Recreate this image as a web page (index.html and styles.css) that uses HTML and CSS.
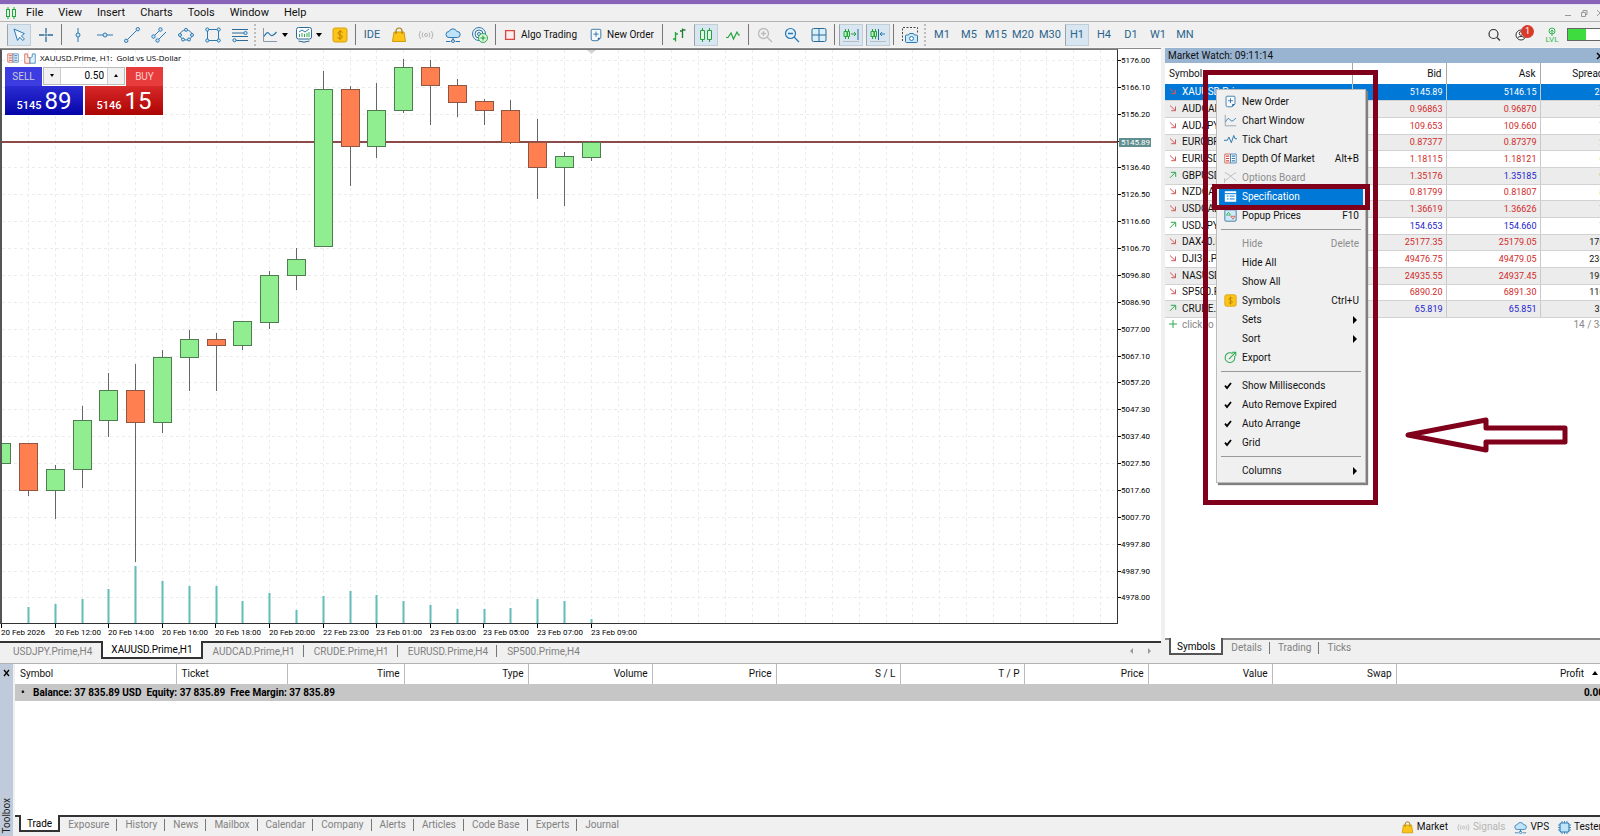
FILE: index.html
```html
<!DOCTYPE html>
<html lang="en">
<head>
<meta charset="utf-8">
<title>XAUUSD.Prime, H1</title>
<link rel="stylesheet" href="styles.css">
</head>
<body>
<svg class="defs" aria-hidden="true">
  <symbol id="i-down" viewBox="0 0 8 8"><path d="M1 1.500 6.200 6.500M6.500 2.500v4.200H2.200" fill="none" stroke="#cf5a5a"/></symbol>
  <symbol id="i-up" viewBox="0 0 8 8"><path d="M1 6.800 6.200 1.600M1.800 1.300h4.900v4.600" fill="none" stroke="#2fa84f"/></symbol>
  <symbol id="i-order" viewBox="0 0 16 16"><path d="M3.500 1.500h9a1 1 0 0 1 1 1v8.500L10 14.500H4.500a2 2 0 0 1-2-2v-10a1 1 0 0 1 1-1z" fill="#f4fafe" stroke="#2a6d9e"/><path d="M8 4v6M5 7h6" stroke="#2a6d9e"/><path d="M13.500 11H11a1 1 0 0 0-1 1v2.500z" fill="#2a6d9e"/></symbol>
  <symbol id="i-chart" viewBox="0 0 16 16"><path d="M1.500 1v13.500H15" fill="none" stroke="#8a99a8"/><path d="M2 9.500C4 6 5.500 4.500 7 6.500s3 4 7.500-1.500" fill="none" stroke="#2d78b0" stroke-width="1.200"/></symbol>
  <symbol id="i-dollar" viewBox="0 0 16 16"><rect x="1" y="1" width="14" height="14" rx="2" fill="#fcc419" stroke="#d9a00c"/><path d="M10.500 5.500C10 4.400 6 4 6 6.200 6 8.300 10.300 7.500 10.300 9.800c0 2.200-4.300 1.900-4.800.3M8 3v10" fill="none" stroke="#b97e00"/></symbol>
  <symbol id="i-bag" viewBox="0 0 16 16"><path d="M3 5h10l1.500 9.500h-13z" fill="#fcc419" stroke="#d09a08"/><path d="M5 7V4a3 3 0 0 1 6 0v3" fill="none" stroke="#a87f10" stroke-width="1.200"/></symbol>
  <symbol id="i-signal" viewBox="0 0 16 16"><g fill="none" stroke="#b5b5b5"><circle cx="8" cy="8" r="1.500"/><path d="M5 5.500a4 4 0 0 0 0 5M11 5.500a4 4 0 0 1 0 5M2.500 4a7 7 0 0 0 0 8M13.500 4a7 7 0 0 1 0 8"/></g></symbol>
  <symbol id="i-cloud" viewBox="0 0 16 16"><path d="M4 10.500a3 3 0 0 1 0-6 4.200 4.200 0 0 1 7.800 0 3 3 0 0 1 .7 6z" fill="#bfe4fa" stroke="#2d78b0"/><path d="M8 10.500v3M1 14.500h4.500M10.500 14.500H15" stroke="#2d78b0"/><circle cx="8" cy="14" r="1.500" fill="none" stroke="#2d78b0"/></symbol>
  <symbol id="i-depth" viewBox="0 0 16 16"><path d="M1 2.500h7v11H1z" fill="#fff" stroke="#c85040"/><path d="M8 2.500h7v11H8z" fill="#fff" stroke="#2d78b0"/><path d="M2.500 5h4M2.500 8h4M2.500 11h4" stroke="#c85040" stroke-width="1.500"/><path d="M9.500 5h4M9.500 8h4M9.500 11h4" stroke="#2d78b0" stroke-width="1.500"/></symbol>
  <symbol id="i-tick" viewBox="0 0 8 8"><path d="M1 3.700 3 6 7 1" fill="none" stroke="#000" stroke-width="1.800"/></symbol>
</svg>

<div class="app">
  <div class="titlebar"></div>
  <header class="menubar">
    <svg class="logo" viewBox="0 0 12 12" width="12" height="12"><path d="M3 0v12M9 0v12" stroke="#22a33c"/><rect x="1.500" y="2.500" width="3" height="7" fill="#e9f9ea" stroke="#22a33c"/><rect x="7.500" y="2.500" width="3" height="7" fill="#e9f9ea" stroke="#22a33c"/></svg>
    <nav class="menus">
      <button>File</button><button>View</button><button>Insert</button><button>Charts</button><button>Tools</button><button>Window</button><button>Help</button>
    </nav>
    <div class="winctl">
      <button aria-label="Minimize"><svg width="8" height="8" viewBox="0 0 8 8"><path d="M1 6.500h6" stroke="#999"/></svg></button>
      <button aria-label="Restore"><svg width="8" height="8" viewBox="0 0 8 8"><path d="M1.500 3.500h4v4h-4zM3 3V1.500h4v4H6" fill="none" stroke="#999"/></svg></button>
      <button aria-label="Close"><svg width="8" height="8" viewBox="0 0 8 8"><path d="m1 1 6 6M7 1 1 7" stroke="#999"/></svg></button>
    </div>
  </header>

  <div class="toolbar">
    <div class="group">
      <button class="tool on" aria-label="Cursor"><svg viewBox="0 0 16 16"><path d="M3 2l3.500 11.500 2.300-3.200 3 3.200 1.600-1.600-3-3 3-2.300z" fill="#f2f9fe" stroke="#2d78b0"/></svg></button>
      <button class="tool" aria-label="Crosshair"><svg viewBox="0 0 16 16"><path d="M8 1v5.500M8 9.500V15M1 8h5.500M9.500 8H15" stroke="#2d6a96" stroke-width="1.300"/><path d="M8 7v2M7 8h2" stroke="#2d6a96"/></svg></button>
    </div>
    <i class="sep"></i>
    <div class="group">
      <button class="tool" aria-label="Vertical line"><svg viewBox="0 0 16 16"><path d="M8 1v5M8 10v5" stroke="#2d78b0"/><circle cx="8" cy="8" r="2" fill="#cfe9fa" stroke="#2d78b0"/></svg></button>
      <button class="tool" aria-label="Horizontal line"><svg viewBox="0 0 16 16"><path d="M0 8h6M10 8h6" stroke="#2d78b0"/><circle cx="8" cy="8" r="2" fill="#cfe9fa" stroke="#2d78b0"/></svg></button>
      <button class="tool" aria-label="Trend line"><svg viewBox="0 0 16 16"><path d="M3 13 13 3" stroke="#2d78b0"/><circle cx="2.200" cy="13.800" r="1.700" fill="#cfe9fa" stroke="#2d78b0"/><circle cx="13.800" cy="2.200" r="1.700" fill="#cfe9fa" stroke="#2d78b0"/></svg></button>
      <button class="tool" aria-label="Channel"><svg viewBox="0 0 16 16"><path d="M3 9 9 3M7 13l8-8" stroke="#2d78b0"/><circle cx="2.500" cy="9.500" r="1.700" fill="#cfe9fa" stroke="#2d78b0"/><circle cx="9.500" cy="2.500" r="1.700" fill="#cfe9fa" stroke="#2d78b0"/><circle cx="6.500" cy="13.500" r="1.700" fill="#cfe9fa" stroke="#2d78b0"/></svg></button>
      <button class="tool" aria-label="Ellipse"><svg viewBox="0 0 16 16"><ellipse cx="8" cy="8" rx="6" ry="5" fill="none" stroke="#2d78b0"/><g fill="#cfe9fa" stroke="#2d78b0"><circle cx="8" cy="2.800" r="1.500"/><circle cx="2" cy="8" r="1.500"/><circle cx="14" cy="8" r="1.500"/><circle cx="5" cy="12.500" r="1.500"/><circle cx="11" cy="12.500" r="1.500"/></g></svg></button>
      <button class="tool" aria-label="Rectangle"><svg viewBox="0 0 16 16"><path d="M2.500 2.500h11v11h-11z" fill="none" stroke="#2d78b0"/><g fill="#cfe9fa" stroke="#2d78b0"><circle cx="2.300" cy="2.500" r="1.600"/><circle cx="13.700" cy="2.500" r="1.600"/><circle cx="2.300" cy="13.500" r="1.600"/><circle cx="13.700" cy="13.500" r="1.600"/></g></svg></button>
      <button class="tool" aria-label="Fibonacci"><svg viewBox="0 0 16 16"><path d="M0 2.500h16M0 6h12M0 9.500h16M4 13.500h12" stroke="#2d6a96" stroke-width="1.200"/><circle cx="13.500" cy="6" r="1.600" fill="#cfe9fa" stroke="#2d78b0"/><circle cx="2.500" cy="13.200" r="1.600" fill="#cfe9fa" stroke="#2d78b0"/></svg></button>
    </div>
    <i class="grip"></i>
    <div class="group wide">
      <button class="tool drop" aria-label="Chart type"><svg viewBox="0 0 16 16"><use href="#i-chart"/></svg><svg class="caret" viewBox="0 0 6 4"><path d="M0 0h6L3 4z"/></svg></button>
      <button class="tool drop" aria-label="Templates"><svg viewBox="0 0 16 16"><rect x=".5" y=".5" width="15" height="11.500" rx="2" fill="#fff" stroke="#2d6a96"/><path d="M2.500 14a14 14 0 0 0 11 0" fill="#bfe4fa" stroke="#2d6a96"/><path d="m3 5 3-2 3 2 4-3" fill="none" stroke="#2d78b0"/><path d="M3.500 10V7M6 10V6M8.500 10V7M11 10V6M13 10V5" stroke="#2fa84f"/></svg><svg class="caret" viewBox="0 0 6 4"><path d="M0 0h6L3 4z"/></svg></button>
      <button class="tool" aria-label="Symbols"><svg viewBox="0 0 16 16"><use href="#i-dollar"/></svg></button>
    </div>
    <i class="sep"></i>
    <div class="group">
      <button class="tool ide">IDE</button>
      <button class="tool" aria-label="Market"><svg viewBox="0 0 16 16"><use href="#i-bag"/></svg></button>
      <button class="tool" aria-label="Signals"><svg viewBox="0 0 16 16"><use href="#i-signal"/></svg></button>
      <button class="tool" aria-label="VPS"><svg viewBox="0 0 16 16"><use href="#i-cloud"/></svg></button>
      <button class="tool" aria-label="Copy"><svg viewBox="0 0 16 16"><g fill="none" stroke="#2d78b0"><circle cx="7" cy="7" r="6.500"/><circle cx="7" cy="7" r="4"/><circle cx="7" cy="7" r="1.500"/></g><circle cx="11" cy="11" r="4.500" fill="#d8f5dc" stroke="#2fa84f"/><path d="M11 8.500v5M8.500 11h5" stroke="#1c9a38"/></svg></button>
    </div>
    <i class="sep"></i>
    <button class="tool text algo"><svg viewBox="0 0 16 16"><path d="M3 3h10v10H3z" fill="#fdeceb" stroke="#d9463b" stroke-width="1.500"/></svg>Algo Trading</button>
    <button class="tool text neworder"><svg viewBox="0 0 16 16"><use href="#i-order"/></svg>New Order</button>
    <i class="sep"></i>
    <div class="group">
      <button class="tool" aria-label="Bars"><svg viewBox="0 0 16 16"><path d="M4.500 5v9.500M2 12h2.500M4.500 7H7" stroke="#22a33c" stroke-width="1.300"/><path d="M11.500 1.500V11M9 4h2.500M11.500 3H14.500" stroke="#1f7a33" stroke-width="1.300"/></svg></button>
      <button class="tool on" aria-label="Candles"><svg viewBox="0 0 16 16"><path d="M4.500 1v14M11.500 1v14" stroke="#22a33c"/><path d="M2.500 3.500h4v9h-4zM9.500 3.500h4v9h-4z" fill="#e3f8e5" stroke="#22a33c"/></svg></button>
      <button class="tool" aria-label="Line"><svg viewBox="0 0 16 16"><path d="M1 10.500h2L6 6l2.500 6L12 5l1.500 3H15" fill="none" stroke="#22a33c" stroke-width="1.200"/></svg></button>
    </div>
    <i class="sep"></i>
    <div class="group">
      <button class="tool" aria-label="Zoom in"><svg viewBox="0 0 16 16"><circle cx="6.500" cy="6.500" r="5" fill="none" stroke="#bbb" stroke-width="1.300"/><path d="M10 10l5 5M4 6.500h5M6.500 4v5" stroke="#bbb" stroke-width="1.300"/></svg></button>
      <button class="tool" aria-label="Zoom out"><svg viewBox="0 0 16 16"><circle cx="6.500" cy="6.500" r="5" fill="#dff1fc" stroke="#2d78b0" stroke-width="1.200"/><path d="M10 10l5 5M4 6.500h5" stroke="#2d78b0" stroke-width="1.300"/></svg></button>
      <button class="tool" aria-label="Tile"><svg viewBox="0 0 16 16"><rect x="1" y="1.500" width="14" height="13" rx="1.500" fill="#d9effb" stroke="#2d6a96"/><path d="M8 1.500v13M1 8h14" stroke="#2d6a96"/></svg></button>
    </div>
    <i class="sep"></i>
    <div class="group">
      <button class="tool on" aria-label="Chart shift"><svg viewBox="0 0 16 16"><path d="M2.500 2v10M5.500 2v10" stroke="#22a33c"/><path d="M1 4.500h3v5H1zM4.500 4.500h2v5h-2z" fill="#bff0c4" stroke="#22a33c"/><path d="M8 7h5M11 5l2 2-2 2" fill="none" stroke="#22a33c"/><path d="M15 2v11" stroke="#2d6a96"/><path d="M0 14.500h16" stroke="#b9bdc2"/></svg></button>
      <button class="tool on" aria-label="Auto scroll"><svg viewBox="0 0 16 16"><path d="M2.500 2v10M5.500 2v10" stroke="#22a33c"/><path d="M1 4.500h3v5H1zM4.500 4.500h2v5h-2z" fill="#bff0c4" stroke="#22a33c"/><path d="M15 7h-5M12 5l-2 2 2 2" fill="none" stroke="#2d78b0"/><path d="M8.500 2v11" stroke="#2d6a96"/><path d="M0 14.500h16" stroke="#b9bdc2"/></svg></button>
    </div>
    <i class="sep"></i>
    <button class="tool" aria-label="Screenshot"><svg viewBox="0 0 16 16"><path d="M.5 14V.5h15V6" fill="none" stroke="#444" stroke-dasharray="2 1.500"/><path d="M4.500 8h2l1-1.500h4L12.500 8h2a1 1 0 0 1 1 1v5.500a1 1 0 0 1-1 1h-10a1 1 0 0 1-1-1V9a1 1 0 0 1 1-1z" fill="#cdeafa" stroke="#2d78b0"/><circle cx="9.500" cy="11.500" r="2" fill="#fff" stroke="#2d78b0"/></svg></button>
    <i class="grip"></i>
    <div class="group frames">
      <button class="tool">M1</button><button class="tool">M5</button><button class="tool">M15</button><button class="tool">M20</button><button class="tool">M30</button><button class="tool on">H1</button><button class="tool">H4</button><button class="tool">D1</button><button class="tool">W1</button><button class="tool">MN</button>
    </div>
    <div class="account">
      <button class="tool" aria-label="Search"><svg viewBox="0 0 16 16"><circle cx="7.500" cy="7" r="4.500" fill="none" stroke="#333" stroke-width="1.200"/><path d="m11 10.500 3 3" stroke="#333" stroke-width="1.300"/></svg></button>
      <button class="tool user" aria-label="Account"><svg viewBox="0 0 16 16"><circle cx="8" cy="8" r="5" fill="#fff" stroke="#333"/><circle cx="8" cy="6.500" r="1.800" fill="none" stroke="#333"/><path d="M4.500 11c1-2 6-2 7 0" fill="none" stroke="#333"/></svg><span class="badge">1</span></button>
      <button class="tool level"><svg viewBox="0 0 10 9"><circle cx="5" cy="4" r="3" fill="none" stroke="#2fb84f"/><path d="M5 9V3M3.500 4.500 5 3l1.500 1.500" fill="none" stroke="#2fb84f"/></svg>LVL</button>
      <div class="battery"><i></i></div>
    </div>
  </div>

  <main class="main">
    <section class="chartcol">
      <div class="chart">
        <div class="plotbox">
          <svg class="plot" id="plot" aria-label="XAUUSD candles"></svg>
          <div class="charthead"><svg width="14" height="12" viewBox="0 0 16 16"><use href="#i-depth"/></svg><svg width="14" height="12" viewBox="0 0 16 16"><path d="M1 2.500h4v5h3V15H1z" fill="#fbe9e6" stroke="#c85040"/><path d="M15 2.500h-4v4L8 8v7h7z" fill="#e2f2fc" stroke="#2d78b0"/></svg><span>XAUUSD.Prime, H1:&nbsp; Gold vs US-Dollar</span></div>
          <div class="oneclick">
            <div class="row">
              <button class="sell side">SELL</button>
              <div class="lot"><button aria-label="Decrease"><svg viewBox="0 0 6 4"><path d="M1 0h4L3 3z"/></svg></button><input aria-label="Volume" value="0.50"><button aria-label="Increase"><svg viewBox="0 0 6 4"><path d="M1 3h4L3 0z"/></svg></button></div>
              <button class="buy side">BUY</button>
            </div>
            <div class="row quotes">
              <button class="sell quote"><small>5145</small><b>89</b></button>
              <button class="buy quote"><small>5146</small><b>15</b></button>
            </div>
          </div>
        </div>
        <svg class="prices" id="prices"></svg>
        <svg class="times" id="times"></svg>
      </div>
      <div class="tabs charttabs">
        <button>USDJPY.Prime,H4</button><button class="active">XAUUSD.Prime,H1</button><button>AUDCAD.Prime,H1</button><button>CRUDE.Prime,H1</button><button>EURUSD.Prime,H4</button><button>SP500.Prime,H4</button>
        <span class="scroll"><svg viewBox="0 0 4 6"><path d="M3 0v6L0 3z"/></svg><svg viewBox="0 0 4 6"><path d="M1 0v6l3-3z"/></svg></span>
      </div>
    </section>

    <aside class="watch">
      <div class="watchtitle"><span>Market Watch: 09:11:14</span><button aria-label="Close"><svg width="8" height="8" viewBox="0 0 8 8"><path d="m1 1 6 6M7 1 1 7" stroke="#000" stroke-width="1.500"/></svg></button></div>
      <div class="watchbody">
        <table class="symbols">
          <colgroup><col class="c-sym"><col class="c-num"><col class="c-num"><col class="c-spr"></colgroup>
          <thead><tr><th>Symbol</th><th>Bid</th><th>Ask</th><th>Spread</th></tr></thead>
          <tbody>
            <tr class="sel"><td><svg><use href="#i-down"/></svg>XAUUSD.Prime</td><td>5145.89</td><td>5146.15</td><td>26</td></tr>
            <tr><td><svg><use href="#i-down"/></svg>AUDCAD.Prime</td><td class="r">0.96863</td><td class="r">0.96870</td><td>7</td></tr>
            <tr><td><svg><use href="#i-down"/></svg>AUDJPY.Prime</td><td class="r">109.653</td><td class="r">109.660</td><td>7</td></tr>
            <tr><td><svg><use href="#i-down"/></svg>EURGBP.Prime</td><td class="r">0.87377</td><td class="r">0.87379</td><td>2</td></tr>
            <tr><td><svg><use href="#i-down"/></svg>EURUSD.Prime</td><td class="r">1.18115</td><td class="r">1.18121</td><td>6</td></tr>
            <tr><td><svg><use href="#i-up"/></svg>GBPUSD.Prime</td><td class="r">1.35176</td><td class="b">1.35185</td><td>9</td></tr>
            <tr><td><svg><use href="#i-down"/></svg>NZDCAD.Prime</td><td class="r">0.81799</td><td class="r">0.81807</td><td>8</td></tr>
            <tr><td><svg><use href="#i-down"/></svg>USDCAD.Prime</td><td class="r">1.36619</td><td class="r">1.36626</td><td>7</td></tr>
            <tr><td><svg><use href="#i-up"/></svg>USDJPY.Prime</td><td class="b">154.653</td><td class="b">154.660</td><td>7</td></tr>
            <tr><td><svg><use href="#i-down"/></svg>DAX40.Prime</td><td class="r">25177.35</td><td class="r">25179.05</td><td>170</td></tr>
            <tr><td><svg><use href="#i-down"/></svg>DJI30.Prime</td><td class="r">49476.75</td><td class="r">49479.05</td><td>230</td></tr>
            <tr><td><svg><use href="#i-down"/></svg>NASUSD.Prime</td><td class="r">24935.55</td><td class="r">24937.45</td><td>190</td></tr>
            <tr><td><svg><use href="#i-down"/></svg>SP500.Prime</td><td class="r">6890.20</td><td class="r">6891.30</td><td>110</td></tr>
            <tr><td><svg><use href="#i-up"/></svg>CRUDE.Prime</td><td class="b">65.819</td><td class="b">65.851</td><td>32</td></tr>
          </tbody>
          <tfoot><tr><td><svg viewBox="0 0 8 8"><path d="M4 0v8M0 4h8" stroke="#2fa84f"/></svg>click to add...</td><td></td><td></td><td>14 / 34</td></tr></tfoot>
        </table>
      </div>
      <div class="tabs watchtabs"><button class="active">Symbols</button><button>Details</button><button>Trading</button><button>Ticks</button></div>

      <div class="context" role="menu">
        <button><svg viewBox="0 0 16 16"><use href="#i-order"/></svg>New Order</button>
        <button><svg viewBox="0 0 16 16"><use href="#i-chart"/></svg>Chart Window</button>
        <button><svg viewBox="0 0 16 16"><path d="M0 9h4l2-4 3 7 3-9 1.500 4H16" fill="none" stroke="#2d78b0" stroke-width="1.200"/></svg>Tick Chart</button>
        <button><svg viewBox="0 0 16 16"><use href="#i-depth"/></svg>Depth Of Market<kbd>Alt+B</kbd></button>
        <button class="off"><svg viewBox="0 0 16 16"><path d="M1 2c4 1 9 6 14 10M15 2C11 3 6 9 1 12M.5 15V9" fill="none" stroke="#bcbcbc" stroke-width="1.200"/></svg>Options Board</button>
        <button class="hot"><svg viewBox="0 0 16 16"><rect x="1" y="1.500" width="14" height="13" fill="#fff"/><path d="M1 4.500h14M3.500 7.500h2M7 7.500h6M3.500 11h2M7 11h6" stroke="#0078d7" stroke-width="1.200"/></svg>Specification</button>
        <button><svg viewBox="0 0 16 16"><rect x="1" y="1" width="14" height="14" rx="1.500" fill="#cdeafa" stroke="#2d6a96"/><path d="M3 7.500 5.500 4 8 7.500z" fill="#d8f5dc" stroke="#2fa84f"/><path d="M8.500 9h5L11 12.500z" fill="#fff" stroke="#c85040"/></svg>Popup Prices<kbd>F10</kbd></button>
        <hr>
        <button class="off"><svg></svg>Hide<kbd>Delete</kbd></button>
        <button><svg></svg>Hide All</button>
        <button><svg></svg>Show All</button>
        <button><svg viewBox="0 0 16 16"><use href="#i-dollar"/></svg>Symbols<kbd>Ctrl+U</kbd></button>
        <button><svg></svg>Sets<i class="sub"></i></button>
        <button><svg></svg>Sort<i class="sub"></i></button>
        <button><svg viewBox="0 0 16 16"><path d="M10.500 3A6 6 0 1 0 13 6M6 10l8.500-8.500M10 1.500h4.500V6" fill="none" stroke="#2fa84f" stroke-width="1.300"/></svg>Export</button>
        <hr>
        <button><svg class="chk"><use href="#i-tick"/></svg>Show Milliseconds</button>
        <button><svg class="chk"><use href="#i-tick"/></svg>Auto Remove Expired</button>
        <button><svg class="chk"><use href="#i-tick"/></svg>Auto Arrange</button>
        <button><svg class="chk"><use href="#i-tick"/></svg>Grid</button>
        <hr>
        <button><svg></svg>Columns<i class="sub"></i></button>
      </div>
      <div class="mark frame"></div>
      <div class="mark focus"></div>
      <svg class="arrow" viewBox="0 0 164 38"><path d="M4 19 82 4v8h79v14H82v8z" fill="#fff" stroke="#80001c" stroke-width="5" stroke-linejoin="round"/></svg>
    </aside>
  </main>

  <section class="toolbox">
    <div class="rail"><button aria-label="Close"><svg width="7" height="8" viewBox="0 0 7 8"><path d="m1 1 5 6M6 1 1 7" stroke="#000" stroke-width="1.300"/></svg></button><span>Toolbox</span></div>
    <div class="tradearea">
      <div class="tradebody">
        <table class="trade">
          <colgroup><col class="t-a"><col class="t-b"><col class="t-c"><col class="t-d"><col class="t-d"><col class="t-d"><col class="t-d"><col class="t-d"><col class="t-d"><col class="t-d"><col class="t-d"><col></colgroup>
          <thead><tr><th>Symbol</th><th>Ticket</th><th>Time</th><th>Type</th><th>Volume</th><th>Price</th><th>S / L</th><th>T / P</th><th>Price</th><th>Value</th><th>Swap</th><th class="profit">Profit<svg width="6" height="4" viewBox="0 0 6 4"><path d="M0 4h6L3 0z"/></svg></th></tr></thead>
          <tbody><tr><td colspan="11"><span class="dot">•</span>Balance: 37 835.89 USD&nbsp; Equity: 37 835.89&nbsp; Free Margin: 37 835.89</td><td><span class="total">0.00</span></td></tr></tbody>
        </table>
      </div>
      <div class="tabs tooltabs">
        <button class="active">Trade</button><button>Exposure</button><button>History</button><button>News</button><button>Mailbox</button><button>Calendar</button><button>Company</button><button>Alerts</button><button>Articles</button><button>Code Base</button><button>Experts</button><button>Journal</button>
        <div class="services">
          <button><svg viewBox="0 0 16 16"><use href="#i-bag"/></svg>Market</button>
          <button class="off"><svg viewBox="0 0 16 16"><use href="#i-signal"/></svg>Signals</button>
          <button><svg viewBox="0 0 16 16"><use href="#i-cloud"/></svg>VPS</button>
          <button><svg viewBox="0 0 16 16"><path d="M5 0v16M8 0v16M11 0v16M0 5h16M0 8h16M0 11h16" stroke="#2d78b0"/><rect x="2.500" y="2.500" width="11" height="11" rx="1.500" fill="#bfe4fa" stroke="#2d78b0" stroke-width="1.300"/></svg>Tester</button>
        </div>
      </div>
    </div>
  </section>
</div>
<script src="chart.js"></script>
</body>
</html>
```
FILE: styles.css
```css
* { box-sizing: border-box; }
html, body { height: 100%; }
body {
  margin: 0;
  overflow: hidden;
  background: #f0f0f0;
  color: #111;
  font-family: Roboto, "Open Sans", sans-serif;
  font-size: 10px;
  line-height: 14px;
}
button, input { font: inherit; color: inherit; background: none; border: 0; padding: 0; margin: 0; white-space: nowrap; }
svg { display: block; flex: none; }
.defs { position: absolute; width: 0; height: 0; }

.app { display: flex; flex-direction: column; height: 100vh; overflow: hidden; }
.titlebar { flex: none; height: 5px; background: #8764b8; border-bottom: 1px solid #e9dff5; }

.menubar { flex: none; display: flex; align-items: center; height: 17px; padding: 0 0 1px 5px; border-bottom: 1px solid #b4b4b4; }
.logo { margin-right: 9px; }
.menus { display: flex; flex: 1; gap: 15px; font-size: 11px; line-height: 14px; }
.winctl { display: flex; gap: 8px; margin-right: -4px; }

/* toolbar */
.toolbar { flex: none; display: flex; align-items: center; height: 26px; padding-left: 7px; border-bottom: 1px solid #f6f6f6; }
.group { display: flex; gap: 3px; }
.group.wide { gap: 5px; }
.tool { display: flex; align-items: center; justify-content: center; flex: none; width: 24px; height: 22px; }
.tool svg { width: 16px; height: 16px; }
.tool.on { background: #d8e6f2; border: 1px solid #c3cdd6; border-left-color: #9aa4ad; }
.tool.drop { width: 29px; gap: 4px; }
.tool svg.caret { width: 6px; height: 4px; }
.sep { flex: none; width: 1px; height: 21px; margin: 0 4px 0 3px; background: #777; }
.grip { flex: none; width: 2px; height: 22px; margin: 0 4px 0 2px; border-left: 2px dotted #bdbdbd; }
.ide, .frames { color: #2b648c; font-size: 11px; }
.tool.text { gap: 4px; justify-content: flex-start; }
.tool.text svg { width: 14px; height: 14px; }
.algo { width: 86px; padding-left: 3px; }
.neworder { width: 73px; padding-left: 3px; }
.account { display: flex; align-items: center; gap: 3px; margin-left: auto; }
.user { position: relative; }
.badge { position: absolute; left: 12px; top: 1px; width: 13px; height: 13px; border-radius: 50%; background: #d93a2b; color: #fff; font-size: 9px; line-height: 13px; text-align: center; }
.level { flex-direction: column; margin-left: 4px; color: #2fb84f; font-size: 8px; line-height: 7px; }
.tool.level svg { width: 10px; height: 9px; }
.battery { width: 33px; height: 13px; border: 1px solid #666; border-right: 0; background: #fff; }
.battery i { display: block; width: 18px; height: 11px; background: #3edc3e; }

/* main area */
.main { flex: 1; display: flex; min-height: 0; }
.chartcol { flex: 1; min-width: 0; display: flex; flex-direction: column; }
.chart { flex: 1; min-height: 0; display: grid; grid-template: 1fr 17px / 1fr 43px; background: #fff; border-top: 1px solid #8a8a8a; }
.plotbox { position: relative; min-width: 0; min-height: 0; border: 1px solid #333; border-top-color: #777; border-left-width: 2px; border-left-color: #555; overflow: hidden; }
.plot { width: 100%; height: 100%; }
.prices { width: 43px; height: 100%; }
.times { grid-column: 1 / 3; width: 100%; height: 17px; }
.chart text { font-family: Roboto, "Open Sans", sans-serif; font-size: 8px; fill: #000; }
.charthead { position: absolute; left: 4px; top: 2px; display: flex; gap: 3px; align-items: center; font: 8px/12px "Open Sans", sans-serif; color: #000; }
.oneclick { position: absolute; left: 3px; top: 17px; width: 158px; height: 48px; display: flex; flex-direction: column; color: #fff; }
.row { display: flex; }
.side { flex: none; width: 37px; height: 19px; color: #ccd; }
.sell { background: #3c3ce0; }
.buy { background: #e83c3c; }
.buy.side { color: #fcc; }
.lot { flex: 1; min-width: 0; display: flex; height: 18px; border: 1px solid #bbb; background: #fff; color: #000; margin: 0 1px; }
.lot button { flex: none; width: 16px; background: #f1f1f1; display: flex; align-items: center; justify-content: center; }
.lot svg { width: 6px; height: 4px; }
.lot input { flex: 1; width: 0; min-width: 0; text-align: right; padding-right: 3px; border: solid #ccc; border-width: 0 1px; }
.quotes { flex: 1; gap: 2px; }
.quote { flex: 1; display: flex; align-items: flex-end; justify-content: center; gap: 3px; padding-bottom: 2px; }
.quote small { font-size: 11px; line-height: 14px; font-weight: 500; }
.quote b { font-size: 24px; line-height: 24px; font-weight: 400; }
.sell.quote { background: linear-gradient(#2c2cd4, #0404a8); }
.buy.quote { background: linear-gradient(#d82828, #ac0404); }

/* tab strips */
.tabs { flex: none; display: flex; align-items: flex-start; color: #808080; border-top: 2px solid #333; background: #f0f0f0; }
.tabs > button { position: relative; height: 15px; padding: 0 8px; }
.tabs > button + button:not(.active)::before { content: ""; position: absolute; left: -1px; top: 2px; height: 12px; border-left: 1px solid #777; }
.tabs > .active + button::before { display: none; }
.tabs > .active { background: #fff; color: #000; border: 2px solid #333; border-top: 0; margin-top: -2px; height: 17px; padding: 2px 6px 0; }
.charttabs { height: 22px; padding-left: 3px; }
.charttabs > button { height: 16px; }
.charttabs > .active { padding: 2px 8px 0; height: 18px; }
.charttabs > button:not(.active) { padding: 1px 9px 0 10px; }
.scroll { display: flex; gap: 13px; margin: 5px 10px 0 auto; }
.scroll svg { width: 4px; height: 6px; fill: #999; }

/* market watch */
.watch { position: relative; flex: none; width: 439px; border-left: 4px solid #f0f0f0; display: flex; flex-direction: column; background: #fff; }
.watchtitle { flex: none; height: 15px; display: flex; align-items: center; justify-content: space-between; padding-left: 3px; background: #99b4d1; overflow: hidden; }
.watchtitle button { margin-right: -4px; }
.watchbody { flex: 1; min-height: 0; overflow: hidden; }
.symbols { width: 443px; table-layout: fixed; border-collapse: collapse; }
.c-sym { width: 187px; }
.c-num { width: 94px; }
.c-spr { width: 68px; }
.symbols th, .symbols td { padding: 0 4px; text-align: right; font-weight: 400; white-space: nowrap; overflow: hidden; border-right: 1px solid #c9c9c9; line-height: 14px; }
.symbols th { height: 21px; border-right-color: #a9a9a9; }
.symbols td { height: 17px; padding-right: 3px; border-bottom: 1px solid #d2d2d2; font-size: 9px; }
.symbols th:first-child { text-align: left; }
.symbols tr:nth-child(3n + 1) td { height: 16px; }
.symbols td:first-child { text-align: left; font-size: 10px; }
.symbols td:first-child svg { display: inline-block; width: 8px; height: 8px; margin-right: 5px; }
.symbols tbody tr:nth-child(even) { background: #ececec; }
.symbols tbody tr.sel { background: #0078d7; color: #fff; }
.symbols .r { color: #d02a2a; }
.symbols .b { color: #2222cc; }
.symbols tfoot tr td { height: 19px; color: #888; border: 0; }
.symbols tfoot td:last-child { font-size: 10px; }
.watchtabs { height: 25px; border-top-color: #888; padding-left: 4px; }
.watchtabs > .active { border-color: #555; }

/* context menu */
.context { position: absolute; left: 51px; top: 41px; width: 150px; padding: 2px; background: #f0f0f0; border: 1px solid #bbb; box-shadow: 2px 2px 1px #808080; }
.context button { display: flex; align-items: center; width: 100%; height: 19px; padding: 0 4px 0 5px; text-align: left; }
.context svg { width: 13px; height: 13px; margin-right: 5px; }
.context svg.chk { width: 8px; height: 8px; margin-right: 10px; }
.context hr { margin: 4px 2px; height: 1px; border: 0; background: #999; }
.context kbd { margin-left: auto; font: inherit; }
.context .off { color: #8c8c8c; }
.context .hot { background: #0078d7; color: #fff; }
.sub { margin: 0 2px 0 auto; border: solid transparent; border-width: 4px 0 4px 4px; border-left-color: #000; }

/* annotations */
.mark { position: absolute; border: 5px solid #80001c; pointer-events: none; }
.frame { left: 38px; top: 22px; width: 175px; height: 435px; }
.focus { left: 47px; top: 136px; width: 158px; height: 26px; }
.arrow { position: absolute; left: 239px; top: 368px; width: 164px; height: 38px; }

/* toolbox */
.toolbox { flex: none; display: flex; height: 173px; border-top: 1px solid #b4b4b4; }
.rail { flex: none; width: 15px; display: flex; flex-direction: column; align-items: center; justify-content: space-between; padding: 5px 0 3px; background: #bfcbda; border-right: 2px solid #f0f0f0; }
.rail span { writing-mode: vertical-rl; transform: rotate(180deg); line-height: 13px; color: #222; }
.tradearea { flex: 1; min-width: 0; display: flex; flex-direction: column; background: #fff; }
.tradebody { flex: 1; min-height: 0; overflow: hidden; }
.trade { width: 100%; table-layout: fixed; border-collapse: collapse; }
.t-a { width: 161px; }
.t-b { width: 111px; }
.t-c { width: 117px; }
.t-d { width: 124px; }
.trade th { height: 20px; padding: 0 4px; text-align: right; font-weight: 400; border-right: 1px solid #bbb; }
.trade th:nth-child(-n + 2) { text-align: left; padding-left: 5px; }
.trade .profit { border-right: 0; padding-right: 2px; }
.profit svg { display: inline-block; margin: 0 0 2px 8px; }
.trade td { height: 17px; padding: 0; background: #c6c6c6; color: #000; font-weight: 700; white-space: nowrap; }
.trade td:last-child { text-align: right; overflow: hidden; }
.total { margin-right: -4px; }
.dot { display: inline-block; width: 12px; margin-left: 6px; }
.tooltabs { height: 21px; padding-left: 4px; }
.services { display: flex; gap: 9px; margin: 0 -2px 0 auto; padding-top: 3px; color: #111; }
.services button { display: flex; align-items: center; gap: 3px; }
.services svg { width: 13px; height: 13px; }
.services .off { color: #b5b5b5; }
```
FILE: chart.js
```js
const NS = 'http://www.w3.org/2000/svg';
const STEP = 26.8;      // distance between bars
const ROW = 26.87;      // distance between price levels
const FIRST = 26;       // centre of bar 1 inside the plot
const TOP = 10;         // first price level inside the plot

function add(parent, name, attrs, text) {
  const node = document.createElementNS(NS, name);
  for (const key in attrs) node.setAttribute(key, attrs[key]);
  if (text) node.textContent = text;
  parent.appendChild(node);
  return node;
}

// [high, open/close top, open/close bottom, low, rising, volume]
const bars = [
  [393, 393, 413, 413, 1, 0],
  [393, 393, 440, 446, 0, 16],
  [415, 419, 440, 469, 1, 19],
  [356, 370, 419, 438, 1, 24],
  [323, 340, 370, 387, 1, 34],
  [314, 340, 372, 512, 0, 57],
  [300, 307, 372, 383, 1, 42],
  [280, 289, 307, 341, 1, 37],
  [283, 289, 295, 341, 0, 37],
  [271, 271, 295, 300, 1, 22],
  [221, 225, 272, 279, 1, 30],
  [198, 209, 225, 240, 1, 13],
  [21, 39, 196, 196, 1, 27],
  [36, 39, 96, 136, 0, 32],
  [33, 60, 96, 108, 1, 28],
  [9, 17, 60, 63, 1, 22],
  [10, 17, 35, 75, 0, 18],
  [29, 35, 52, 67, 0, 14],
  [49, 51, 60, 75, 0, 14],
  [50, 60, 92, 94, 0, 15],
  [69, 92, 117, 149, 0, 24],
  [102, 106, 117, 156, 1, 22],
  [92, 92, 107, 111, 1, 4]
];

const plot = document.getElementById('plot');
const width = plot.clientWidth;
const height = plot.clientHeight;

for (let x = FIRST; x < width; x += STEP)
  add(plot, 'line', { x1: Math.round(x) + 0.5, x2: Math.round(x) + 0.5, y1: 0, y2: height, stroke: '#ececec', 'stroke-dasharray': '3 3' });
for (let y = TOP; y < height; y += ROW)
  add(plot, 'line', { x1: 0, x2: width, y1: Math.round(y) + 0.5, y2: Math.round(y) + 0.5, stroke: '#ececec', 'stroke-dasharray': '3 3' });

add(plot, 'line', { x1: 0, x2: width, y1: 92, y2: 92, stroke: '#8c4a48', 'stroke-width': 2 });
add(plot, 'path', { d: 'M585 0h9l-4.500 4z', fill: '#d4d4d4' });

bars.forEach(([high, top, bottom, low, rising, volume], i) => {
  const x = Math.round(FIRST + (i - 1) * STEP) + 0.5;
  add(plot, 'line', { x1: x, x2: x, y1: high, y2: low, stroke: '#666' });
  add(plot, 'rect', { x: x - 9, y: top + 0.5, width: 18, height: bottom - top, fill: rising ? '#90ee90' : '#ff7f50', stroke: rising ? '#4e7d52' : '#8f5742' });
  if (volume) add(plot, 'rect', { x: x - 1, y: height - volume, width: 2, height: volume, fill: '#62bcb8' });
});

const prices = document.getElementById('prices');
for (let i = 0; i <= 20; i++) {
  const y = Math.round(TOP + i * ROW) + 1;
  add(prices, 'line', { x1: 0, x2: 3, y1: y + 0.5, y2: y + 0.5, stroke: '#000' });
  if (i === 3) {
    add(prices, 'rect', { x: 1, y: y - 3, width: 32, height: 9, fill: '#5f8f90' });
    add(prices, 'text', { x: 3, y: y + 4, style: 'fill:#fff' }, '5145.89');
  } else {
    add(prices, 'text', { x: 3, y: y + 3 }, (5176 - i * 9.9).toFixed(2));
  }
}

const labels = ['20 Feb 2026', '20 Feb 12:00', '20 Feb 14:00', '20 Feb 16:00', '20 Feb 18:00', '20 Feb 20:00', '22 Feb 23:00', '23 Feb 01:00', '23 Feb 03:00', '23 Feb 05:00', '23 Feb 07:00', '23 Feb 09:00'];
const times = document.getElementById('times');
labels.forEach((label, i) => {
  const x = Math.round(2 + i * STEP * 2);
  add(times, 'line', { x1: x - 0.5, x2: x - 0.5, y1: 0, y2: 4, stroke: '#000' });
  add(times, 'text', { x: x - 1, y: 11 }, label);
});
```
